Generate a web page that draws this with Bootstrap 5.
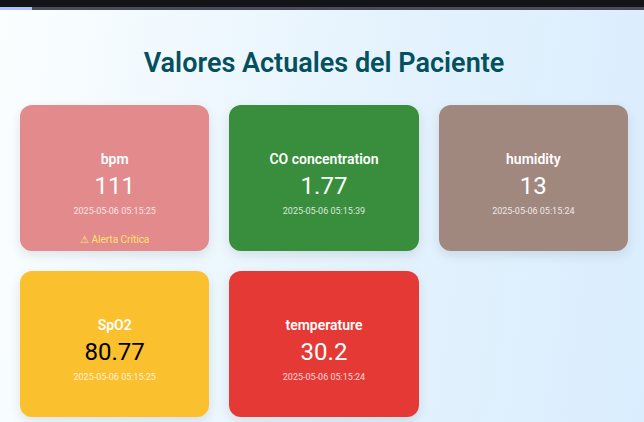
<!DOCTYPE html>
<html lang="es">
<head>
<meta charset="utf-8">
<meta name="viewport" content="width=device-width, initial-scale=1">
<title>Valores Actuales del Paciente</title>
<link rel="stylesheet" href="https://cdn.jsdelivr.net/npm/bootstrap@5.3.0/dist/css/bootstrap.min.css">
<style>
body {
  font-family: Roboto, "Liberation Sans", sans-serif;
  min-height: 100vh;
  background: linear-gradient(98deg, #fbfeff 0%, #e3f2fd 60%, #daedfe 100%);
}
.top-strip { height: 10px; background: #121418; border-bottom: 3px solid #4a4d59; }
.top-strip-fill { width: 5%; height: 3px; margin-top: 7px; background: #afc3fb; }
.page-body { padding: 37px 16px 4px 20px; }
.page-title { font-size: 27px; line-height: 32px; font-weight: 600; color: #04505f; margin-bottom: 26px; }
.reading-grid { display: grid; grid-template-columns: repeat(3, 1fr); gap: 20px; }
.reading { min-height: 146px; border: 0; border-radius: 12px; box-shadow: 0 4px 12px rgba(0, 0, 0, .1); color: #fff; padding: 44px 8px 0; }
.reading-name { font-size: 14px; line-height: 20px; font-weight: 600; }
.reading-value { font-size: 24px; line-height: 34px; }
.reading-time { font-size: 9px; line-height: 17px; opacity: .8; }
.reading-alert { font-size: 10px; line-height: 16px; margin-top: 12px; color: #ffe566; }
.tone-bpm { background: #e28a8c; }
.tone-co { background: #388e3c; }
.tone-humidity { background: #a1887f; }
.tone-spo2 { background: #fbc02d; }
.tone-temp { background: #e53935; }
</style>
</head>
<body>
<div class="top-strip"><div class="d-flex"><div class="top-strip-fill"></div></div></div>
<main class="page-body">
  <h1 class="page-title text-center">Valores Actuales del Paciente</h1>
  <section class="reading-grid">
    <article class="reading card text-center tone-bpm">
      <h2 class="reading-name mb-0">bpm</h2>
      <div class="reading-value">111</div>
      <time class="reading-time">2025-05-06 05:15:25</time>
      <div class="reading-alert">⚠ Alerta Crítica</div>
    </article>
    <article class="reading card text-center tone-co">
      <h2 class="reading-name mb-0">CO concentration</h2>
      <div class="reading-value">1.77</div>
      <time class="reading-time">2025-05-06 05:15:39</time>
    </article>
    <article class="reading card text-center tone-humidity">
      <h2 class="reading-name mb-0">humidity</h2>
      <div class="reading-value">13</div>
      <time class="reading-time">2025-05-06 05:15:24</time>
    </article>
    <article class="reading card text-center tone-spo2">
      <h2 class="reading-name mb-0">SpO2</h2>
      <div class="reading-value text-black">80.77</div>
      <time class="reading-time">2025-05-06 05:15:25</time>
    </article>
    <article class="reading card text-center tone-temp">
      <h2 class="reading-name mb-0">temperature</h2>
      <div class="reading-value">30.2</div>
      <time class="reading-time">2025-05-06 05:15:24</time>
    </article>
  </section>
</main>
<script src="https://cdn.jsdelivr.net/npm/bootstrap@5.3.0/dist/js/bootstrap.bundle.min.js"></script>
</body>
</html>
